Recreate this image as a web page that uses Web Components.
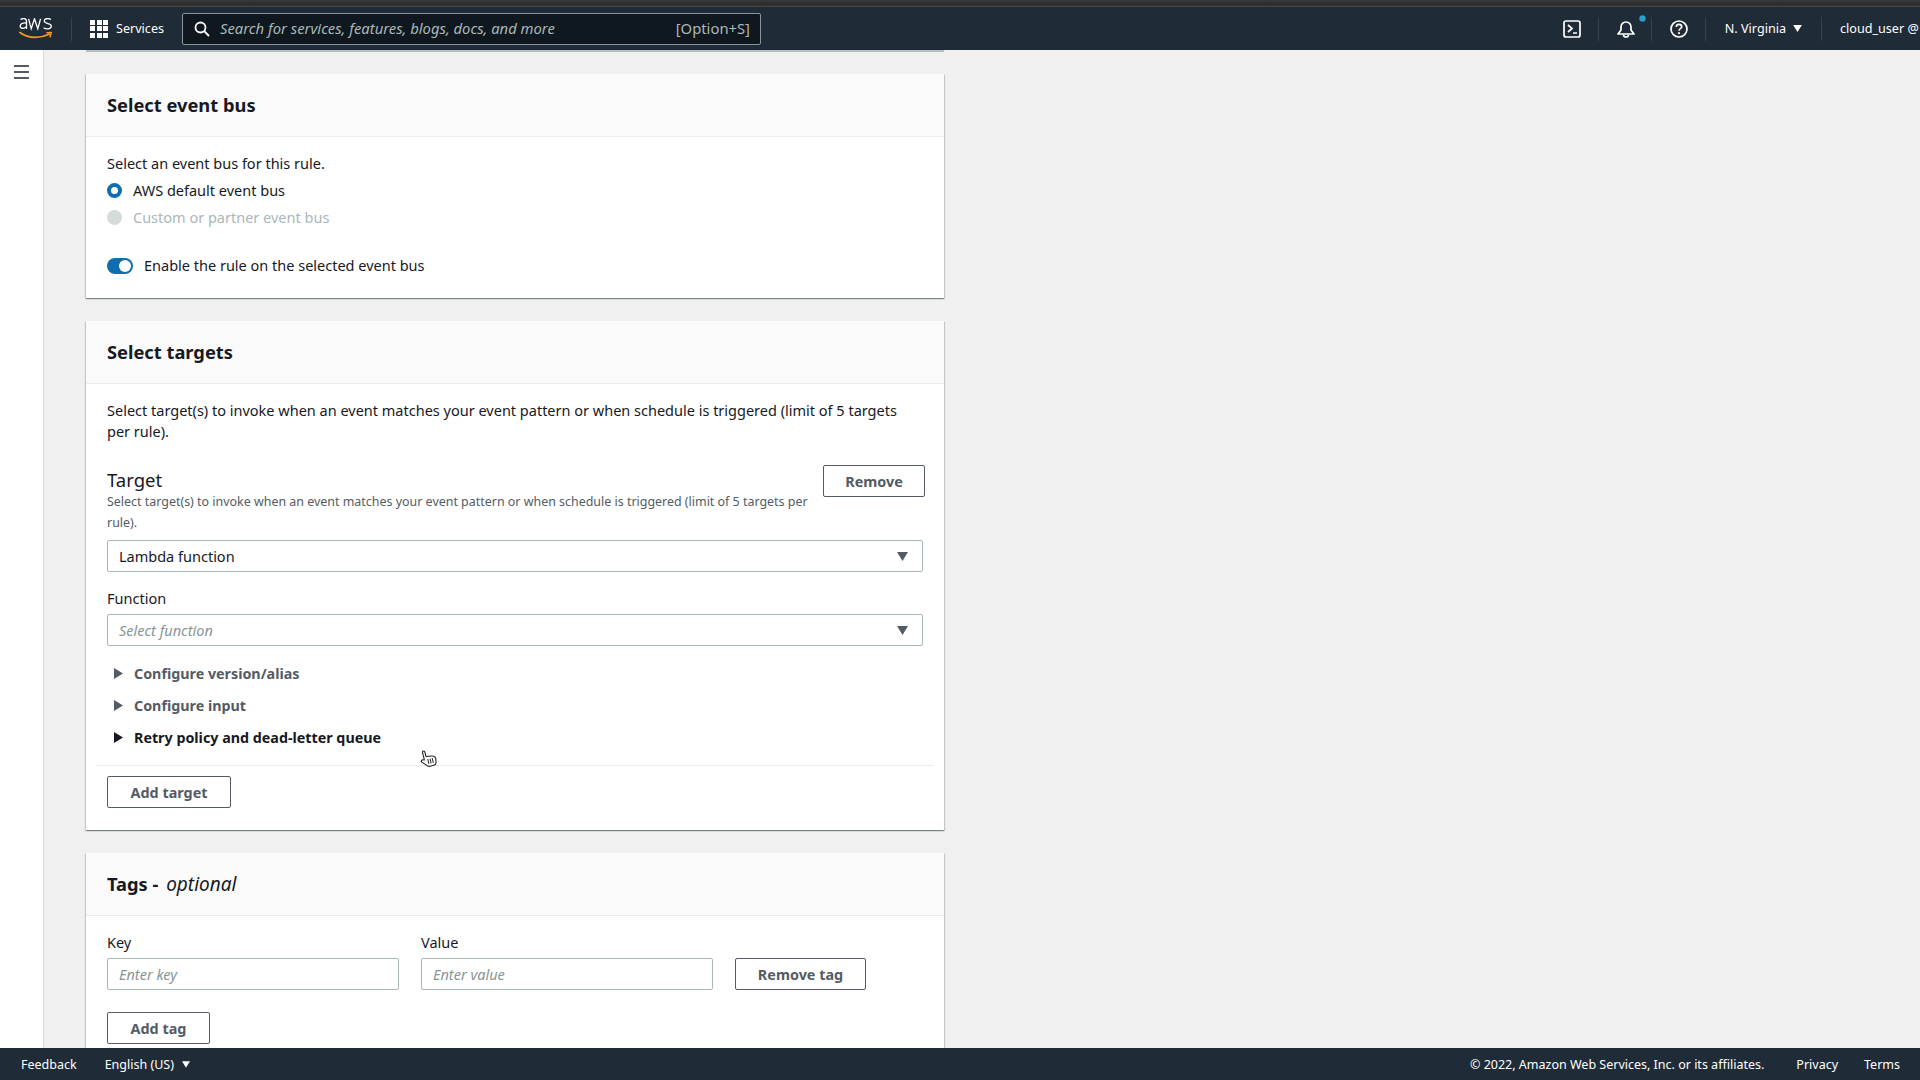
<!DOCTYPE html>
<html lang="en"><head><meta charset="utf-8"><title>EventBridge rule</title>
<style>
html,body{margin:0;height:100%;overflow:hidden}
body{font:14.5px/21px "Noto Sans","Liberation Sans",sans-serif;color:#16191f;background:#f0f0f0}
</style></head><body>
<aws-app>
  <aws-topnav slot="top"></aws-topnav>
  <aws-sidebar slot="side"></aws-sidebar>
  <aws-card heading="Select event bus" style="--body-h:161px">
    <aws-text>Select an event bus for this rule.</aws-text>
    <aws-radio checked>AWS default event bus</aws-radio>
    <aws-radio disabled>Custom or partner event bus</aws-radio>
    <aws-toggle>Enable the rule on the selected event bus</aws-toggle>
  </aws-card>
  <aws-card heading="Select targets" style="--body-h:446px">
    <aws-targets></aws-targets>
  </aws-card>
  <aws-card style="--body-h:200px">
    <span slot="title">Tags - <i style="font-weight:400;font-size:19px;margin-left:3px">optional</i></span>
    <aws-tags></aws-tags>
  </aws-card>
  <aws-footer slot="bottom"></aws-footer>
</aws-app>
<aws-cursor></aws-cursor>
<script>
const def=(name,html,extra)=>{customElements.define(name,class extends HTMLElement{
  constructor(){super();const r=this.attachShadow({mode:'open'});r.innerHTML=typeof html==='function'?html(this):html;if(extra)extra(this,r)}
})};
const caret=(w,h,c)=>`<svg width="${w}" height="${h}" viewBox="0 0 10 8" style="display:block"><path d="M0 0h10L5 8z" fill="${c}"/></svg>`;

def('aws-app',`<style>
:host{display:flex;flex-direction:column;width:1920px;height:1080px;overflow:hidden;background:#f0f0f0}
.strip{height:7px;flex:none;background:linear-gradient(#36383a 0,#2a2b2d 70%,#4a4d50 100%)}
.mid{flex:1;min-height:0;display:flex;overflow:hidden}
.main{flex:1;min-width:0;padding:0 0 0 42px;overflow:hidden}
.col{width:858px;display:flex;flex-direction:column;gap:23px;}
.prev{height:0;width:858px;margin-bottom:-1px;border-bottom:2px solid #b4bcbe}
</style>
<div class="strip"></div>
<slot name="top"></slot>
<div class="mid"><slot name="side"></slot>
  <div class="main"><div class="col"><div class="prev"></div><slot></slot></div></div>
</div>
<slot name="bottom"></slot>`);

def('aws-topnav',`<style>
:host{display:flex;flex:none;align-items:center;height:43px;background:#1f2b37;color:#fff;font-size:12.6px;line-height:18px}
.logo{margin-left:19px;width:34px;height:22px;flex:none}
.sep{width:1px;height:24px;background:#36434f;flex:none}
.grid{display:grid;grid-template-columns:repeat(3,5px);grid-auto-rows:5px;gap:1.5px;flex:none}
.grid i{background:#fff;display:block}
.services{margin-left:8px;width:48px;white-space:nowrap}
.search{margin-left:18px;width:579px;height:32px;box-sizing:border-box;border:1px solid #8a939c;border-radius:2px;background:#10181f;display:flex;align-items:center;color:#aab7b8;font-size:14.8px;padding:0 10px 0 11px;flex:none}
.search i{margin:-2px 0 0 10px}.search span{margin:-2px 0 0 auto}
.ico{display:block;flex:none}
.right{margin-left:auto;display:flex;align-items:center;height:100%}
.user{white-space:nowrap;width:80px}
</style>
<svg class="logo" viewBox="0 0 34 22" aria-hidden="true">
  <path d="M1 14.500C5.200 17.800 10.800 19.400 16.500 19.400 21 19.400 25.500 18.400 29.900 16.300" fill="none" stroke="#f49c22" stroke-width="1.800" stroke-linecap="round"/>
  <path d="M28 14.800l4.300-.4-1.200 4.300" fill="none" stroke="#f49c22" stroke-width="1.500" stroke-linecap="round" stroke-linejoin="round"/>
  <path d="M1.500 1.500C2.500.8 3.500.6 4.500.6 6.500.6 7.500 1.600 7.500 3.500V11M7.500 5C4.500 4.700 1.200 5.200 1.200 8 1.200 10.800 5 11 7.500 8.700M9.600.8L12.200 10.800 15.500.8 18.800 10.800 21.600.8M32 1.500C31 .9 30 .6 28.800.6 26.800.6 25.300 1.500 25.300 3.100 25.300 6.400 32.300 4.800 32.300 8 32.300 9.800 30.600 10.800 28.600 10.800 27 10.800 25.600 10.400 24.600 9.700" fill="none" stroke="#fff" stroke-width="1.300"/>
</svg>
<div class="sep" style="margin-left:18px"></div>
<div class="grid" style="margin-left:18px"><i></i><i></i><i></i><i></i><i></i><i></i><i></i><i></i><i></i></div>
<span class="services">Services</span>
<div class="search">
  <svg class="ico" width="16" height="16" viewBox="0 0 16 16"><circle cx="6.500" cy="6.500" r="5" fill="none" stroke="#fff" stroke-width="1.800"/><path d="M10.200 10.200L15 15" stroke="#fff" stroke-width="1.800"/></svg>
  <i>Search for services, features, blogs, docs, and more</i><span>[Option+S]</span>
</div>
<div class="right">
  <svg class="ico" width="18" height="18" viewBox="0 0 18 18"><rect x="1" y="1" width="16" height="16" rx="2" fill="none" stroke="#fff" stroke-width="1.700"/><path d="M5 5l4 3.500L5 12" fill="none" stroke="#fff" stroke-width="1.700"/><path d="M10 13h4" stroke="#fff" stroke-width="1.500"/></svg>
  <div class="sep" style="margin-left:17px"></div>
  <svg class="ico" width="20" height="20" viewBox="0 0 20 20" style="margin-left:17px"><path d="M2 15l3-4V8a5 5 0 0 1 10 0v3l3 4z" fill="none" stroke="#fff" stroke-width="1.700" stroke-linejoin="round"/><path d="M7.500 15.500a2.500 2.500 0 0 0 5 0" fill="none" stroke="#fff" stroke-width="1.700"/></svg>
  <svg class="ico" width="7" height="7" viewBox="0 0 7 7" style="margin:-20px 0 0 3px"><circle cx="3.500" cy="3.500" r="3.200" fill="#2a9fc7"/></svg>
  <div class="sep" style="margin-left:5px"></div>
  <svg class="ico" width="18" height="18" viewBox="0 0 18 18" style="margin-left:18px"><circle cx="9" cy="9" r="8" fill="none" stroke="#fff" stroke-width="1.700"/><path d="M6.300 7c0-1.700 1.200-2.600 2.700-2.600S11.700 5.300 11.700 6.800C11.700 8.700 9 8.700 9 10.800" fill="none" stroke="#fff" stroke-width="1.600"/><circle cx="9" cy="13.200" r="1.100" fill="#fff"/></svg>
  <div class="sep" style="margin-left:17px"></div>
  <span style="margin-left:19px;white-space:nowrap">N. Virginia</span>
  <span style="margin-left:7px">${caret(9,7,'#fff')}</span>
  <div class="sep" style="margin-left:19px"></div>
  <span class="user" style="margin-left:18px">cloud_user @</span>
</div>`);

def('aws-sidebar',`<style>
:host{display:block;flex:none;width:43px;background:#fff;border-right:1px solid #d5dbdb;box-sizing:content-box}
svg{display:block;margin:15px 0 0 14px}
</style><svg width="15" height="14" viewBox="0 0 15 14"><path d="M0 1h15M0 7h15M0 13h15" stroke="#545b64" stroke-width="2"/></svg>`);

def('aws-card',h=>`<style>
:host{display:block;flex:none;background:#fff;box-shadow:0 1px 1px 0 rgba(0,28,36,.3),1px 1px 1px 0 rgba(0,28,36,.15),-1px 1px 1px 0 rgba(0,28,36,.15)}
header{height:63px;box-sizing:border-box;background:#fafafa;border-bottom:1px solid #eaeded;padding:0 21px;display:flex;align-items:center;font-size:18.3px;font-weight:700;line-height:22px}
.b{padding:0 21px;height:var(--body-h);box-sizing:border-box;overflow:hidden}
</style><header><slot name="title">${h.getAttribute('heading')||''}</slot></header><div class="b"><slot></slot></div>`);

def('aws-text',`<style>:host{display:block;padding-top:16px;height:21px;line-height:21px;margin-bottom:3px}</style><slot></slot>`);

def('aws-radio',h=>{const on=h.hasAttribute('checked'),dis=h.hasAttribute('disabled');return `<style>
:host{display:flex;align-items:center;height:27px;color:${dis?'#aab7b8':'inherit'}}
.d{width:15px;height:15px;border-radius:50%;flex:none;box-sizing:border-box;margin-right:11px;${on?'background:#fff;border:4.500px solid #0f6fae':'background:#d5dbdb'}}
</style><span class="d"></span><slot></slot>`});

def('aws-toggle',`<style>
:host{display:flex;align-items:center;height:21px;margin-top:24px}
.t{width:26px;height:16px;border-radius:8px;background:#0f6fae;position:relative;flex:none;margin-right:11px}
.t::after{content:"";position:absolute;right:2px;top:2px;width:12px;height:12px;border-radius:50%;background:#fff}
</style><span class="t"></span><slot></slot>`);

def('aws-button',`<style>
:host{display:inline-flex;align-items:center;justify-content:center;box-sizing:border-box;height:32px;border:1px solid #545b64;border-radius:2px;background:#fff;color:#545b64;font-weight:700;font-size:14.4px;flex:none}
</style><slot></slot>`);

def('aws-select',h=>`<style>
:host{display:flex;align-items:center;box-sizing:border-box;height:32px;border:1px solid #aab7b8;border-radius:2px;background:#fff;padding:0 14px 0 11px;justify-content:space-between;${h.hasAttribute('ph')?'color:#879596;font-style:italic':''}}
</style><span><slot></slot></span>${caret(11,9,'#545b64')}`);

def('aws-input',`<style>
:host{display:flex;align-items:center;box-sizing:border-box;height:32px;border:1px solid #aab7b8;border-radius:2px;background:#fff;padding:0 11px;color:#879596;font-style:italic}
</style><slot></slot>`);

def('aws-expander',h=>{const dark=h.hasAttribute('dark');return `<style>
:host{display:flex;align-items:center;height:32px;font-weight:700;font-size:14.3px;color:${dark?'#16191f':'#545b64'};padding-left:7px}
svg{margin-right:11px;flex:none}
</style><svg width="9" height="11" viewBox="0 0 9 11"><path d="M0 0l9 5.500L0 11z" fill="currentColor"/></svg><slot></slot>`});

def('aws-targets',`<style>
:host{display:block;padding-top:16px}
.intro{line-height:21px;width:815px}
.head{display:flex;justify-content:space-between;margin-top:23px}
.t{font-size:18.5px;line-height:22px;padding-top:4px}
.d{font-size:12.45px;line-height:21px;color:#545b64;width:710px;margin-top:0}
.lab{margin-top:16px;line-height:21px;margin-bottom:5px}
aws-select{width:816px}
.exp{margin-top:11px}
.rule{height:1px;background:#eaeded;margin:12px -11px 10px -11px}
.head aws-button{width:102px;margin-right:-2px}
</style>
<div class="intro">Select target(s) to invoke when an event matches your event pattern or when schedule is triggered (limit of 5 targets per rule).</div>
<div class="head"><div><div class="t">Target</div><div class="d">Select target(s) to invoke when an event matches your event pattern or when schedule is triggered (limit of 5 targets per rule).</div></div><aws-button>Remove</aws-button></div>
<aws-select style="margin-top:7px">Lambda function</aws-select>
<div class="lab">Function</div>
<aws-select ph>Select function</aws-select>
<div class="exp">
<aws-expander>Configure version/alias</aws-expander>
<aws-expander>Configure input</aws-expander>
<aws-expander dark>Retry policy and dead-letter queue</aws-expander>
</div>
<div class="rule"></div>
<aws-button style="width:124px">Add target</aws-button>`);

def('aws-tags',`<style>
:host{display:block;padding-top:16px}
.r{display:flex;gap:22px;align-items:flex-end}
.f{width:292px}
.f div{line-height:21px;margin-bottom:5px}
</style>
<div class="r">
<div class="f"><div>Key</div><aws-input>Enter key</aws-input></div>
<div class="f"><div>Value</div><aws-input>Enter value</aws-input></div>
<aws-button style="width:131px">Remove tag</aws-button>
</div>
<aws-button style="width:103px;margin-top:22px">Add tag</aws-button>`);

def('aws-footer',`<style>
:host{display:flex;flex:none;height:32px;align-items:center;background:#1f2b37;color:#fff;font-size:12.5px;padding:0 20px 0 21px;box-sizing:border-box;position:relative}
.r{margin-left:auto;display:flex;gap:32px}
.r span:last-child{margin-left:-6px}
.lang{margin-left:28px;display:flex;align-items:center;gap:8px}
</style>
<span>Feedback</span>
<span class="lang">English (US) ${caret(8,7,'#fff')}</span>
<div class="r"><span>© 2022, Amazon Web Services, Inc. or its affiliates.</span><span>Privacy</span><span>Terms</span></div>`);

def('aws-cursor',`<style>:host{position:absolute;left:419px;top:748px;width:18px;height:20px;display:block}svg{transform:rotate(-14deg)}</style>
<svg width="18" height="20" viewBox="0 0 18 20"><path d="M5 11V3.500c0-1.800 2.400-1.800 2.400 0V8l6 1c2 .4 3 1.200 3 3l-.6 4c-.3 1.600-1.300 2.500-3 2.500H9c-1.500 0-2.500-.8-3.300-2L2 12.500c-1-1.500 1-2.800 2-1.700z" fill="#fff" stroke="#222" stroke-width="1.100" stroke-linejoin="round"/><path d="M8.500 11v5M10.800 11v5M13 11v5" stroke="#222" stroke-width="1"/></svg>`);
</script>
</body></html>
